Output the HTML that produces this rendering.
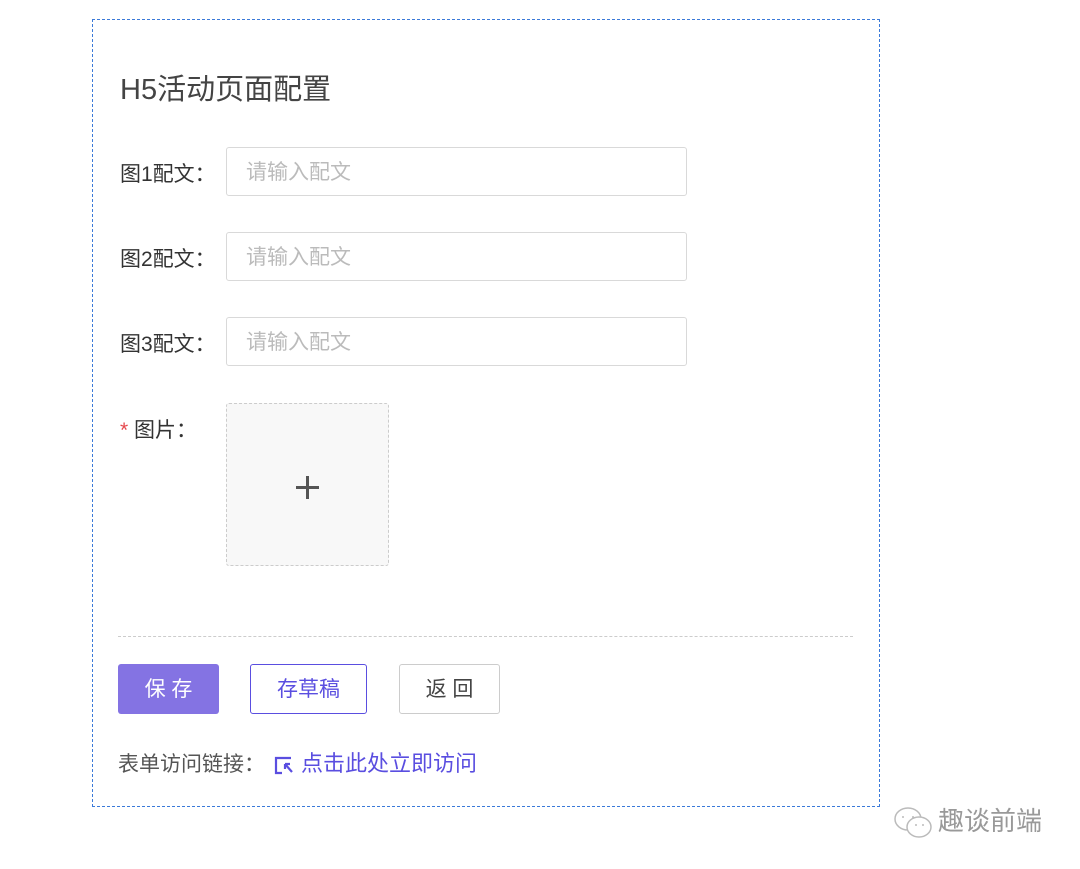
<!DOCTYPE html>
<html><head><meta charset="utf-8"><style>
body{margin:0;width:1080px;height:869px;background:#fff;position:relative;font-family:"Liberation Sans","Noto Sans CJK SC",sans-serif;overflow:hidden}
.box{position:absolute;left:92px;top:19px;width:786px;height:786px;border:1px dashed #3b7ad9;}
.a{position:absolute;white-space:nowrap;line-height:1}
.lbl{font-size:21px;color:#333}
.inp{position:absolute;left:226px;width:461px;height:49px;border:1px solid #d9d9d9;border-radius:3px;box-sizing:border-box;font-size:21px;color:#bbb;padding-left:19px;line-height:50px}
.btn{position:absolute;top:664px;height:50px;box-sizing:border-box;border-radius:3px;font-size:21px;text-align:center;line-height:52px}
</style></head><body>
<div class="box"></div>
<div class="a" style="left:120px;top:76px;font-size:29px;color:#444">H5活动页面配置</div>
<div class="a lbl" style="left:120px;top:164px">图1配文：</div>
<div class="inp" style="top:147px">请输入配文</div>
<div class="a lbl" style="left:120px;top:249px">图2配文：</div>
<div class="inp" style="top:232px">请输入配文</div>
<div class="a lbl" style="left:120px;top:334px">图3配文：</div>
<div class="inp" style="top:317px">请输入配文</div>
<div class="a lbl" style="left:120px;top:420px"><span style="color:#e5484d">*</span> 图片：</div>
<div style="position:absolute;left:226px;top:403px;width:163px;height:163px;box-sizing:border-box;border:1px dashed #ccc;background:#f8f8f8;border-radius:3px"></div>
<div style="position:absolute;left:296px;top:486px;width:23px;height:3px;background:#555"></div>
<div style="position:absolute;left:306px;top:476px;width:3px;height:23px;background:#555"></div>
<div style="position:absolute;left:118px;top:636px;width:735px;border-top:1px dashed #ccc"></div>
<div class="btn" style="left:118px;width:101px;background:#8473e3;color:#fff">保 存</div>
<div class="btn" style="left:250px;width:117px;border:1px solid #5a4ee0;color:#5a4ee0;line-height:50px">存草稿</div>
<div class="btn" style="left:399px;width:101px;border:1px solid #ccc;color:#444;line-height:50px">返 回</div>
<div class="a" style="left:118px;top:754px;font-size:21px;color:#555">表单访问链接：</div>
<svg style="position:absolute;left:273px;top:754px" width="22" height="22" viewBox="0 0 22 22" fill="none" stroke="#5a4ee0" stroke-width="2.2"><path d="M18 4H3v15h6"/><path d="M12 10l7 8M12 10v5M12 10h5"/></svg>
<div class="a" style="left:301px;top:753px;font-size:22px;color:#5a4ee0">点击此处立即访问</div>
<svg style="position:absolute;left:893px;top:806px" width="42" height="34" viewBox="0 0 42 34" fill="none" stroke="#bbb" stroke-width="1.5"><ellipse cx="15" cy="13" rx="13" ry="11"/><ellipse cx="26" cy="21" rx="12" ry="10" fill="#fff"/><path d="M9 11h2M19 11h2M22 19h2M29 19h2"/></svg>
<div class="a" style="left:938px;top:808px;font-size:26px;color:#999">趣谈前端</div>
</body></html>
